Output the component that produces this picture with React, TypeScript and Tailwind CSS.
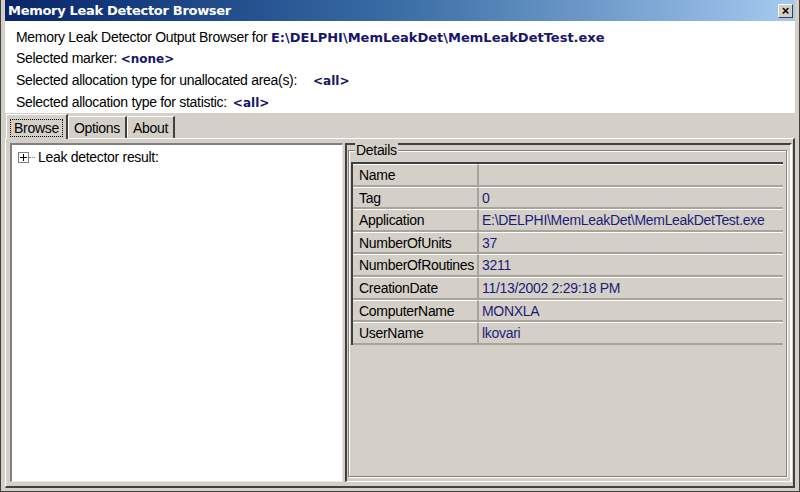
import React from 'react';

const ROWS: [string, string][] = [
    ['Name', ''],
    ['Tag', '0'],
    ['Application', 'E:\\DELPHI\\MemLeakDet\\MemLeakDetTest.exe'],
    ['NumberOfUnits', '37'],
    ['NumberOfRoutines', '3211'],
    ['CreationDate', '11/13/2002 2:29:18 PM'],
    ['ComputerName', 'MONXLA'],
    ['UserName', 'lkovari'],
];

const TABS = ['Browse', 'Options', 'About'];

const App: React.FC = () => {
    return (
        <div className="w-[800px] h-[492px] bg-[#d4d0c8] flex flex-col px-[4px] pb-[3px] border-x border-b border-[#404040] overflow-hidden font-['Liberation_Sans',Arial,sans-serif] text-[14px] tracking-[-0.3px] text-black">
            {/* title bar */}
            <div className="h-[21px] shrink-0 flex items-center justify-between pl-[3px] pr-[2px] bg-gradient-to-r from-[#0a246a] via-[#3a6ea5] to-[#a6caf0]">
                <span className="font-['DejaVu_Sans',sans-serif] font-bold text-[13px] text-white tracking-[-0.3px]">Memory Leak Detector Browser</span>
                <div className="w-[15px] h-[14px] bg-[#d4d0c8] border-t border-l border-white border-r border-b border-r-[#404040] border-b-[#404040] flex items-center justify-center text-[13px] leading-none text-black font-bold">×</div>
            </div>

            {/* info header */}
            <div className="h-[92px] shrink-0 bg-white pl-[11px] pt-[6px] leading-[21px]">
                <div>
                    Memory Leak Detector Output Browser for{' '}
                    <span className="font-['DejaVu_Sans',sans-serif] font-bold text-[13px] tracking-normal text-[#16166a]">E:\DELPHI\MemLeakDet\MemLeakDetTest.exe</span>
                </div>
                <div>
                    Selected marker: <span className="font-['DejaVu_Sans',sans-serif] font-bold text-[12px] tracking-normal text-[#16166a]">&lt;none&gt;</span>
                </div>
                <div>
                    Selected allocation type for unallocated area(s):
                    <span className="ml-[16px] font-['DejaVu_Sans',sans-serif] font-bold text-[12px] tracking-normal text-[#16166a]">&lt;all&gt;</span>
                </div>
                <div>
                    Selected allocation type for statistic:
                    <span className="ml-[6px] font-['DejaVu_Sans',sans-serif] font-bold text-[12px] tracking-normal text-[#16166a]">&lt;all&gt;</span>
                </div>
            </div>

            {/* tabs */}
            <div className="h-[25px] shrink-0 flex items-end pl-[1px]">
                {TABS.map((t, i) => (
                    <div
                        key={t}
                        className={
                            i === 0
                                ? 'relative z-10 h-[25px] -mb-[1px] px-[3px] pt-[3px] bg-[#d4d0c8] border-t border-l border-white border-r-2 border-r-[#404040]'
                                : 'h-[22px] px-[5px] pt-[1px] bg-[#d4d0c8] border-t border-l border-white border-r-2 border-r-[#404040]'
                        }
                    >
                        <span className={i === 0 ? 'px-[3px] border border-dotted border-black leading-[16px] inline-block' : 'leading-[18px]'}>{t}</span>
                    </div>
                ))}
            </div>

            {/* tab page */}
            <div className="flex-1 flex border-t border-l border-white border-r-2 border-b-2 border-r-[#404040] border-b-[#404040] p-[4px] pr-[1px] gap-[2px]">
                {/* tree */}
                <div className="w-[333px] bg-white border-t-2 border-l-2 border-t-[#808080] border-l-[#808080] border-b border-r border-b-[#e8e8e8] border-r-[#e8e8e8] pt-[3px] pl-[6px]">
                    <div className="flex items-center h-[18px]">
                        <div className="w-[11px] h-[11px] border border-[#808080] bg-white flex items-center justify-center relative">
                            <div className="absolute w-[7px] h-[1px] bg-black" />
                            <div className="absolute w-[1px] h-[7px] bg-black" />
                        </div>
                        <div className="w-[6px] border-t border-dotted border-[#808080] mr-[3px]" />
                        <span>Leak detector result:</span>
                    </div>
                </div>

                {/* details side */}
                <div className="flex-1 border-t-2 border-l-2 border-t-[#404040] border-l-[#404040] border-b border-r-2 border-b-white border-r-white pl-[1px] pr-[3px] pt-[5px] pb-[4px] flex">
                    <div className="flex-1 relative border border-[#808080] shadow-[inset_1px_1px_0_#ffffff,1px_1px_0_#ffffff] pl-[2px] pr-[3px] pt-[11px] pb-[3px]">
                        <span className="absolute -top-[9px] left-[6px] px-[1px] bg-[#d4d0c8] leading-[16px]">Details</span>
                        <div className="border-t-2 border-l-2 border-t-[#404040] border-l-[#404040]">
                            {ROWS.map(([k, v]) => (
                                <div key={k} className="flex h-[22.6px] border-b-2 border-b-[#a8a49c]">
                                    <div className="w-[126px] pl-[6px] border-r-2 border-r-[#a8a49c] border-t border-t-white leading-[20px] whitespace-nowrap overflow-hidden">{k}</div>
                                    <div className="flex-1 pl-[3px] border-t border-t-white leading-[20px] text-[#1c1c78]">{v}</div>
                                </div>
                            ))}
                        </div>
                    </div>
                </div>
            </div>
        </div>
    );
};

export default App;
